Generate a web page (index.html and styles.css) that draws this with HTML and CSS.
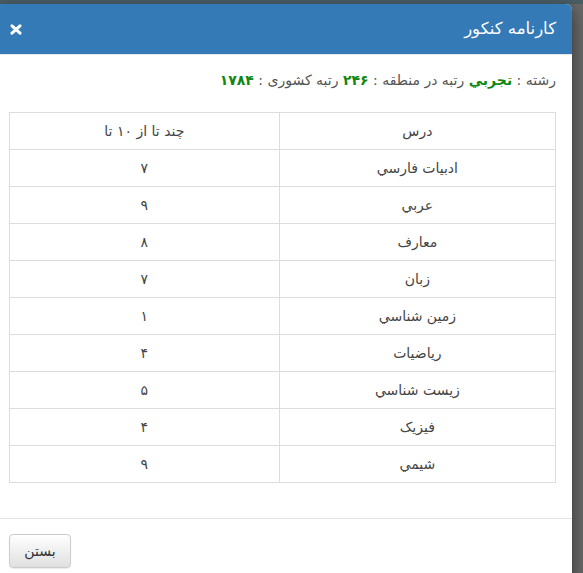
FILE: index.html
```html
<!DOCTYPE html>
<html lang="fa" dir="rtl">
<head>
    <meta charset="utf-8">
    <title>کارنامه کنکور</title>
    <link rel="stylesheet" href="styles.css">
</head>
<body>
    <div class="modal">
        <div class="modal-header">
            <h4 class="modal-title">کارنامه کنکور</h4>
            <span class="close">
                <svg width="12" height="11" viewBox="0 0 12 11">
                    <path d="M2 1.8 L10 9.2 M10 1.8 L2 9.2" stroke="#fff" stroke-width="3" stroke-linecap="round"/>
                </svg>
            </span>
        </div>
        <div class="modal-body">
            <div class="summary">
                رشته : <b>تجربي</b> رتبه در منطقه : <b>۲۴۶</b> رتبه کشوری : <b>۱۷۸۴</b>
            </div>
            <table class="results">
                <tr><td>درس</td><td>چند تا از ١٠ تا</td></tr>
                <tr><td>ادبيات فارسي</td><td>٧</td></tr>
                <tr><td>عربي</td><td>٩</td></tr>
                <tr><td>معارف</td><td>٨</td></tr>
                <tr><td>زبان</td><td>٧</td></tr>
                <tr><td>زمين شناسي</td><td>١</td></tr>
                <tr><td>رياضيات</td><td>۴</td></tr>
                <tr><td>زيست شناسي</td><td>۵</td></tr>
                <tr><td>فيزيک</td><td>۴</td></tr>
                <tr><td>شيمي</td><td>٩</td></tr>
            </table>
        </div>
        <div class="modal-footer">
            <button class="btn">بستن</button>
        </div>
    </div>
</body>
</html>
```

FILE: styles.css
```css
html, body {
    margin: 0;
    height: 100%;
    overflow: hidden;
}
body {
    background: linear-gradient(#4b5d65 0 4px, #676767 4px);
    font-family: "DejaVu Sans", sans-serif;
    font-size: 14px;
    line-height: 20px;
    color: #333;
}
.modal {
    margin: 4px auto 0 0;
    width: 572px;
    background: #fff;
    border-radius: 0 6px 0 0;
    box-shadow: 0 5px 15px rgba(0, 0, 0, 0.5);
}
.modal-header {
    display: flex;
    justify-content: space-between;
    align-items: center;
    height: 50px;
    padding: 0 16px 0 10px;
    background-color: #337ab7;
    border-radius: 0 6px 0 0;
    border-bottom: 1px solid #e5e5e5;
}
.modal-title {
    margin: 0;
    color: #fff;
    font-size: 16.5px;
    font-weight: normal;
}
.close {
    display: flex;
}
.modal-body {
    padding: 15px 16px 15px 9px;
}
.summary {
    color: #555;
    margin-bottom: 22px;
}
.summary b {
    color: #118811;
}
.results {
    width: 100%;
    border-collapse: collapse;
    margin-bottom: 20px;
}
.results td {
    border: 1px solid #ddd;
    padding: 8px;
    text-align: center;
    color: #444;
}
.results td:first-child {
    width: 50.6%;
}
.modal-footer {
    border-top: 1px solid #e5e5e5;
    padding: 15px 9px;
    text-align: left;
}
.btn {
    min-width: 62px;
    font-family: inherit;
    font-size: 14px;
    line-height: 20px;
    height: 34px;
    padding: 6px 12px;
    color: #333;
    background: linear-gradient(#fff, #e0e0e0);
    border: 1px solid #ccc;
    border-radius: 4px;
    box-shadow: 0 1px 1px rgba(0, 0, 0, 0.08);
}
```
